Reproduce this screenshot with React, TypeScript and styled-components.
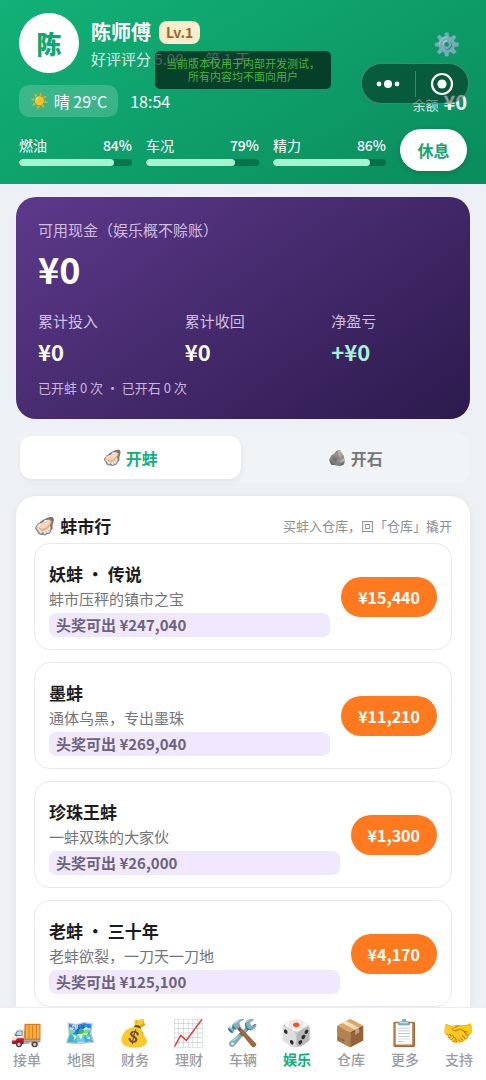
import React, { useState } from 'react';
import styled, { createGlobalStyle } from 'styled-components';

const GlobalStyle = createGlobalStyle`
  * { box-sizing: border-box; }
  body {
    margin: 0;
    background: #edf1f6;
    color: #1c1c20;
    font-family: "Noto Sans CJK SC", "Noto Sans", sans-serif;
  }
  button { font: inherit; border: 0; padding: 0; cursor: pointer; }
  h1, h2, h3, p, dl, dd, ul { margin: 0; padding: 0; }
  ul { list-style: none; }
`;

const Screen = styled.div`
  display: flex;
  flex-direction: column;
  height: 100vh;
`;

const Header = styled.header`
  position: relative;
  display: flex;
  flex-direction: column;
  gap: 12px;
  padding: 13px 19px;
  color: #fff;
  background: linear-gradient(150deg, #12b178 0%, #0a8c5c 100%);
`;

const ProfileRow = styled.div`
  display: flex;
  align-items: center;
  gap: 12px;
`;

const Avatar = styled.div`
  display: grid;
  place-items: center;
  width: 60px;
  height: 60px;
  border-radius: 50%;
  background: #fff;
  color: #10a871;
  font-size: 25px;
  font-weight: 900;
`;

const Identity = styled.div`
  flex: 1;
  padding-top: 4px;
`;

const NameLine = styled.div`
  display: flex;
  align-items: center;
  gap: 8px;
`;

const Name = styled.h1`
  font-size: 20px;
  line-height: 28px;
  font-weight: 700;
`;

const Level = styled.span`
  padding: 0 7px;
  border-radius: 8px;
  background: #fdecc9;
  color: #9b672b;
  font-size: 14px;
  line-height: 23px;
  font-weight: 700;
`;

const Rating = styled.p`
  font-size: 15px;
  line-height: 26px;
  color: rgba(255, 255, 255, 0.85);
`;

const GearButton = styled.button`
  margin-right: 6px;
  background: none;
  font-size: 24px;
  line-height: 28px;
  opacity: 0.9;
`;

const StatusRow = styled.div`
  display: flex;
  align-items: center;
  gap: 12px;
  font-size: 16px;
`;

const Weather = styled.span`
  display: flex;
  align-items: center;
  gap: 5px;
  padding: 0 11px;
  border-radius: 10px;
  background: rgba(255, 255, 255, 0.18);
  line-height: 32px;
`;

const Balance = styled.span`
  display: flex;
  align-items: baseline;
  gap: 5px;
  margin-left: auto;
  padding-top: 4px;
  font-size: 13px;
  line-height: 24px;
  color: rgba(255, 255, 255, 0.85);
`;

const BalanceValue = styled.strong`
  color: #fff;
  font-size: 20px;
`;

const GaugeRow = styled.div`
  display: flex;
  align-items: center;
  gap: 14px;
`;

const Gauge = styled.div`
  flex: 1;
`;

const GaugeLabel = styled.div`
  display: flex;
  justify-content: space-between;
  font-size: 14px;
  line-height: 20px;
  margin-bottom: 4px;
`;

const GaugeValue = styled.span`
  font-weight: 500;
`;

const Track = styled.div`
  height: 7px;
  border-radius: 4px;
  overflow: hidden;
  background: rgba(0, 0, 0, 0.25);
`;

const Fill = styled.div`
  height: 100%;
  border-radius: 4px;
  background: #a7f3d0;
`;

const RestButton = styled.button`
  width: 67px;
  height: 42px;
  border-radius: 21px;
  background: #fff;
  color: #10a871;
  font-size: 16px;
  font-weight: 700;
  box-shadow: 0 2px 6px rgba(0, 0, 0, 0.15);
`;

const Notice = styled.div`
  position: absolute;
  top: 51px;
  left: 50%;
  width: 176px;
  transform: translateX(-50%);
  padding: 6px 0;
  border-radius: 5px;
  background: rgba(0, 0, 0, 0.6);
  color: #45b53a;
  font-size: 11px;
  line-height: 13px;
  text-align: center;
`;

const Capsule = styled.div`
  position: absolute;
  top: 63px;
  right: 17px;
  display: flex;
  align-items: center;
  width: 108px;
  height: 41px;
  border: 1px solid rgba(255, 255, 255, 0.25);
  border-radius: 21px;
  background: rgba(0, 0, 0, 0.4);
`;

const CapsuleButton = styled.button`
  display: grid;
  place-items: center;
  flex: 1;
  height: 26px;
  background: none;
  & + & { border-left: 1px solid rgba(255, 255, 255, 0.25); }
`;

const Main = styled.main`
  flex: 1;
  min-height: 0;
  display: flex;
  flex-direction: column;
  gap: 13px;
  padding: 13px 16px;
  overflow-y: auto;
  scrollbar-width: none;
  & > * { flex-shrink: 0; }
`;

const CashCard = styled.section`
  padding: 20px 22px;
  border-radius: 20px;
  color: #fff;
  background: linear-gradient(145deg, #5d398b 0%, #2c1a4d 100%);
`;

const CashLabel = styled.h2`
  font-size: 15px;
  line-height: 26px;
  font-weight: 400;
  color: #d0bfe2;
`;

const CashValue = styled.p`
  font-size: 36px;
  line-height: 50px;
  font-weight: 700;
`;

const Totals = styled.dl`
  display: grid;
  grid-template-columns: repeat(3, 1fr);
  column-gap: 30px;
  margin-top: 15px;
`;

const TotalLabel = styled.dt`
  font-size: 15px;
  line-height: 26px;
  color: #d0bfe2;
`;

const TotalValue = styled.dd<{ $gain?: boolean }>`
  font-size: 22px;
  line-height: 34px;
  font-weight: 700;
  color: ${(p) => (p.$gain ? '#a7f3d8' : '#fff')};
`;

const CashFoot = styled.p`
  margin-top: 8px;
  font-size: 13px;
  line-height: 23px;
  color: #c9b8dc;
`;

const Tabs = styled.div`
  display: flex;
  gap: 4px;
  padding: 4px;
  border-radius: 14px;
  background: #f0f4f7;
`;

const Tab = styled.button<{ $active: boolean }>`
  flex: 1;
  display: flex;
  align-items: center;
  justify-content: center;
  gap: 4px;
  height: 43px;
  border-radius: 12px;
  font-size: 16px;
  font-weight: 700;
  color: ${(p) => (p.$active ? '#10b07a' : '#74777c')};
  background: ${(p) => (p.$active ? '#fff' : 'transparent')};
  box-shadow: ${(p) => (p.$active ? '0 2px 6px rgba(30, 40, 60, 0.08)' : 'none')};
`;

const Panel = styled.section`
  padding: 16px 18px;
  border-radius: 20px;
  background: #fff;
  box-shadow: 0 2px 8px rgba(30, 40, 60, 0.06);
`;

const PanelHead = styled.div`
  display: flex;
  align-items: center;
  justify-content: space-between;
  margin-bottom: 4px;
`;

const PanelTitle = styled.h2`
  display: flex;
  align-items: center;
  gap: 5px;
  font-size: 17px;
  line-height: 27px;
  font-weight: 700;
`;

const PanelNote = styled.span`
  font-size: 13px;
  color: #8c9096;
`;

const Goods = styled.ul`
  display: flex;
  flex-direction: column;
  gap: 12px;
`;

const Item = styled.li`
  display: flex;
  align-items: center;
  gap: 11px;
  padding: 12px 14px;
  border: 1px solid #e8e9ee;
  border-radius: 16px;
`;

const ItemBody = styled.div`
  flex: 1;
  padding-top: 4px;
`;

const ItemName = styled.h3`
  font-size: 17px;
  line-height: 27px;
  font-weight: 700;
`;

const ItemText = styled.p`
  font-size: 15px;
  line-height: 24px;
  color: #74757b;
`;

const Prize = styled.p`
  margin-top: 2px;
  padding: 0 7px;
  border-radius: 7px;
  background: #f0e8ff;
  color: #6c627c;
  font-size: 15px;
  line-height: 24px;
  font-weight: 700;
`;

const PriceButton = styled.button`
  height: 40px;
  padding: 0 17px;
  border-radius: 20px;
  background: #ff7a1f;
  color: #fff;
  font-size: 16px;
  font-weight: 700;
`;

const Nav = styled.nav`
  display: flex;
  padding: 10px 0;
  border-top: 1px solid #eceef2;
  background: #fff;
`;

const NavLink = styled.a<{ $active?: boolean }>`
  flex: 1;
  display: flex;
  flex-direction: column;
  align-items: center;
  font-size: 14px;
  line-height: 21px;
  text-decoration: none;
  font-weight: ${(p) => (p.$active ? 700 : 500)};
  color: ${(p) => (p.$active ? '#10b07a' : '#999da4')};
`;

const Emoji = styled.span<{ $size: number }>`
  font-family: "Noto Color Emoji", sans-serif;
  font-size: ${(p) => p.$size}px;
  font-weight: 400;
  line-height: ${(p) => p.$size + 5}px;
`;

const gauges = [
  { label: '燃油', value: 84 },
  { label: '车况', value: 79 },
  { label: '精力', value: 86 },
];

const goods = [
  { name: '妖蚌 · 传说', text: '蚌市压秤的镇市之宝', prize: '¥247,040', price: '¥15,440' },
  { name: '墨蚌', text: '通体乌黑，专出墨珠', prize: '¥269,040', price: '¥11,210' },
  { name: '珍珠王蚌', text: '一蚌双珠的大家伙', prize: '¥26,000', price: '¥1,300' },
  { name: '老蚌 · 三十年', text: '老蚌欲裂，一刀天一刀地', prize: '¥125,100', price: '¥4,170' },
];

const links = [
  ['🚚', '接单'],
  ['🗺️', '地图'],
  ['💰', '财务'],
  ['📈', '理财'],
  ['🛠️', '车辆'],
  ['🎲', '娱乐'],
  ['📦', '仓库'],
  ['📋', '更多'],
  ['🤝', '支持'],
];

export default function App() {
  const [tab, setTab] = useState('clam');
  return (
    <Screen>
      <GlobalStyle />
      <Header>
        <ProfileRow>
          <Avatar>陈</Avatar>
          <Identity>
            <NameLine>
              <Name>陈师傅</Name>
              <Level>Lv.1</Level>
            </NameLine>
            <Rating>好评评分 5.00 · 第 1 天</Rating>
          </Identity>
          <GearButton aria-label="设置"><Emoji $size={22}>⚙️</Emoji></GearButton>
        </ProfileRow>
        <StatusRow>
          <Weather><Emoji $size={15}>☀️</Emoji>晴 29°C</Weather>
          <span>18:54</span>
          <Balance>余额 <BalanceValue>¥0</BalanceValue></Balance>
        </StatusRow>
        <GaugeRow>
          {gauges.map((g) => (
            <Gauge key={g.label}>
              <GaugeLabel>
                <span>{g.label}</span>
                <GaugeValue>{g.value}%</GaugeValue>
              </GaugeLabel>
              <Track><Fill style={{ width: `${g.value}%` }} /></Track>
            </Gauge>
          ))}
          <RestButton>休息</RestButton>
        </GaugeRow>
        <Notice>当前版本仅用于内部开发测试，<br />所有内容均不面向用户</Notice>
        <Capsule>
          <CapsuleButton aria-label="菜单">
            <svg width="24" height="10" viewBox="0 0 24 10" fill="#fff">
              <circle cx="3" cy="5" r="2.4" /><circle cx="12" cy="5" r="4" /><circle cx="21" cy="5" r="2.4" />
            </svg>
          </CapsuleButton>
          <CapsuleButton aria-label="关闭">
            <svg width="24" height="24" viewBox="0 0 24 24">
              <circle cx="12" cy="12" r="10" fill="none" stroke="#fff" strokeWidth="2.2" />
              <circle cx="12" cy="12" r="4.6" fill="#fff" />
            </svg>
          </CapsuleButton>
        </Capsule>
      </Header>
      <Main>
        <CashCard>
          <CashLabel>可用现金（娱乐概不赊账）</CashLabel>
          <CashValue>¥0</CashValue>
          <Totals>
            <div><TotalLabel>累计投入</TotalLabel><TotalValue>¥0</TotalValue></div>
            <div><TotalLabel>累计收回</TotalLabel><TotalValue>¥0</TotalValue></div>
            <div><TotalLabel>净盈亏</TotalLabel><TotalValue $gain>+¥0</TotalValue></div>
          </Totals>
          <CashFoot>已开蚌 0 次 · 已开石 0 次</CashFoot>
        </CashCard>
        <Tabs role="tablist">
          <Tab role="tab" aria-selected={tab === 'clam'} $active={tab === 'clam'} onClick={() => setTab('clam')}>
            <Emoji $size={15}>🦪</Emoji>开蚌
          </Tab>
          <Tab role="tab" aria-selected={tab === 'stone'} $active={tab === 'stone'} onClick={() => setTab('stone')}>
            <Emoji $size={15}>🪨</Emoji>开石
          </Tab>
        </Tabs>
        <Panel>
          <PanelHead>
            <PanelTitle><Emoji $size={17}>🦪</Emoji>蚌市行</PanelTitle>
            <PanelNote>买蚌入仓库，回「仓库」撬开</PanelNote>
          </PanelHead>
          <Goods>
            {goods.map((g) => (
              <Item key={g.name}>
                <ItemBody>
                  <ItemName>{g.name}</ItemName>
                  <ItemText>{g.text}</ItemText>
                  <Prize>头奖可出 {g.prize}</Prize>
                </ItemBody>
                <PriceButton>{g.price}</PriceButton>
              </Item>
            ))}
          </Goods>
        </Panel>
      </Main>
      <Nav>
        {links.map(([icon, label]) => (
          <NavLink key={label} href="#" $active={label === '娱乐'}>
            <Emoji $size={26}>{icon}</Emoji>
            {label}
          </NavLink>
        ))}
      </Nav>
    </Screen>
  );
}
